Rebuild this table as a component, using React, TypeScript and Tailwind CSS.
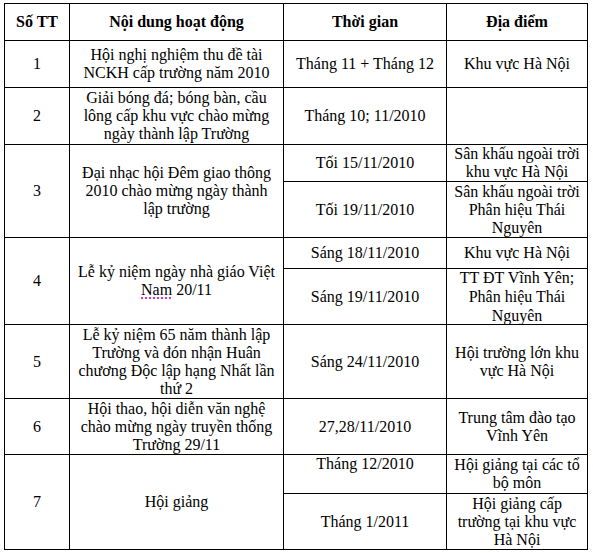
import React from "react";

const C = ({
  children,
  className = "",
}: {
  children?: React.ReactNode;
  className?: string;
}) => (
  <div className={`bg-white flex flex-col items-center justify-center text-center whitespace-nowrap ${className}`}>
    {children}
  </div>
);

const L = ({ children }: { children: React.ReactNode }) => <span className="block">{children}</span>;

export default function App() {
  return (
    <div className="min-h-[553px] w-[593px] bg-white pt-[3px] pl-[4px]">
      <div
        className="grid w-fit bg-black p-px gap-px text-black text-[16px] leading-[18px] grid-cols-[64px_213px_162px_140px] grid-rows-[36px_46px_56px_36px_55px_30px_55px_73px_55px_38px_55px]"
        style={{ fontFamily: '"Liberation Serif", "Times New Roman", serif' }}
      >
        {/* header */}
        <C className="font-bold">Số TT</C>
        <C className="font-bold">Nội dung hoạt động</C>
        <C className="font-bold">Thời gian</C>
        <C className="font-bold">Địa điểm</C>

        {/* row 1 */}
        <C>1</C>
        <C>
          <L>Hội nghị nghiệm thu đề tài</L>
          <L>NCKH cấp trường năm 2010</L>
        </C>
        <C>Tháng 11 + Tháng 12</C>
        <C>Khu vực Hà Nội</C>

        {/* row 2 */}
        <C>2</C>
        <C>
          <L>Giải bóng đá; bóng bàn, cầu</L>
          <L>lông cấp khu vực chào mừng</L>
          <L>ngày thành lập Trường</L>
        </C>
        <C>Tháng 10; 11/2010</C>
        <C />

        {/* row 3 */}
        <C className="row-span-2">3</C>
        <C className="row-span-2">
          <L>Đại nhạc hội Đêm giao thông</L>
          <L>2010 chào mừng ngày thành</L>
          <L>lập trường</L>
        </C>
        <C>Tối 15/11/2010</C>
        <C>
          <L>Sân khấu ngoài trời</L>
          <L>khu vực Hà Nội</L>
        </C>
        <C>Tối 19/11/2010</C>
        <C>
          <L>Sân khấu ngoài trời</L>
          <L>Phân hiệu Thái</L>
          <L>Nguyên</L>
        </C>

        {/* row 4 */}
        <C className="row-span-2">4</C>
        <C className="row-span-2">
          <L>Lễ kỷ niệm ngày nhà giáo Việt</L>
          <L>
            <span className="underline decoration-dotted decoration-[#cc00cc] underline-offset-[3px]">Nam</span> 20/11
          </L>
        </C>
        <C>Sáng 18/11/2010</C>
        <C>Khu vực Hà Nội</C>
        <C>Sáng 19/11/2010</C>
        <C className="leading-[19px]">
          <L>TT ĐT Vĩnh Yên;</L>
          <L>Phân hiệu Thái</L>
          <L>Nguyên</L>
        </C>

        {/* row 5 */}
        <C>5</C>
        <C>
          <L>Lễ kỷ niệm 65 năm thành lập</L>
          <L>Trường và đón nhận Huân</L>
          <L>chương Độc lập hạng Nhất lần</L>
          <L>thứ 2</L>
        </C>
        <C>Sáng 24/11/2010</C>
        <C>
          <L>Hội trường lớn khu</L>
          <L>vực Hà Nội</L>
        </C>

        {/* row 6 */}
        <C>6</C>
        <C>
          <L>Hội thao, hội diễn văn nghệ</L>
          <L>chào mừng ngày truyền thống</L>
          <L>Trường 29/11</L>
        </C>
        <C>27,28/11/2010</C>
        <C>
          <L>Trung tâm đào tạo</L>
          <L>Vĩnh Yên</L>
        </C>

        {/* row 7 */}
        <C className="row-span-2">7</C>
        <C className="row-span-2">Hội giảng</C>
        <C className="!justify-start">Tháng 12/2010</C>
        <C>
          <L>Hội giảng tại các tổ</L>
          <L>bộ môn</L>
        </C>
        <C>Tháng 1/2011</C>
        <C>
          <L>Hội giảng cấp</L>
          <L>trường tại khu vực</L>
          <L>Hà Nội</L>
        </C>
      </div>
    </div>
  );
}
